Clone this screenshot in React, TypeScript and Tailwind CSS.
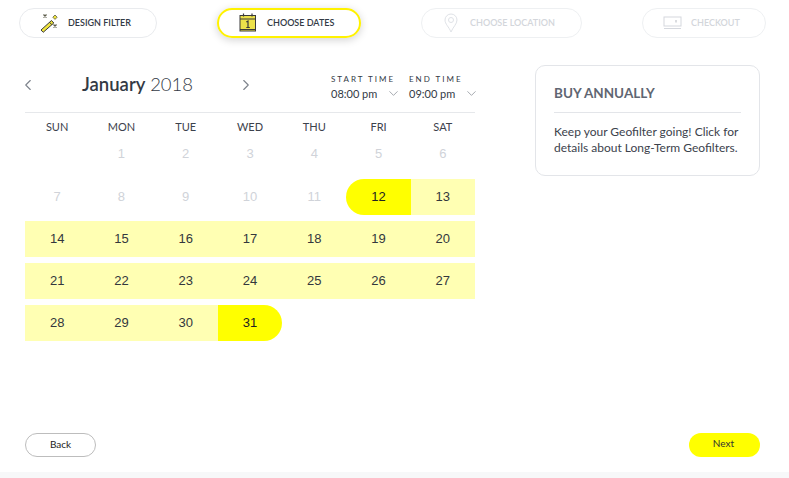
import React from "react";
import { ChevronLeft, ChevronRight, ChevronDown } from "lucide-react";

const Wand = () => (
  <svg width="20" height="20" viewBox="0 0 20 20" fill="none">
    <path d="M1 17 L11.500 7.500 L13.800 10 L3.200 19.300 Z" fill="#efe43c" stroke="#3a3a3a" strokeWidth="1" />
    <path d="M9.500 9.300 L11.800 11.700" stroke="#3a3a3a" strokeWidth="1" />
    <path d="M3.500 1.500 L6.500 4.500 M6.500 1.500 L3.500 4.500" stroke="#5b5b4a" strokeWidth="1.300" />
    <path d="M15 2 L17.200 4.200 L15 6.400 L12.800 4.200 Z" fill="#efe43c" stroke="#5b5b4a" strokeWidth="0.800" />
    <path d="M13.500 11.500 L16.500 14.500 M16.500 11.500 L13.500 14.500" stroke="#5b5b4a" strokeWidth="1.300" />
  </svg>
);

const CalIcon = () => (
  <svg width="18" height="20" viewBox="0 0 18 20" fill="none">
    <rect x="1" y="2.500" width="15.500" height="15.500" fill="#ece14a" stroke="#3a3a3a" strokeWidth="1" />
    <path d="M1 6 H16.500 M1 16.500 H16.500" stroke="#3a3a3a" strokeWidth="1" />
    <path d="M4.500 0.500 V3.500 M13 0.500 V3.500" stroke="#3a3a3a" strokeWidth="1.200" />
    <path d="M7.300 9 L9 8 V14.500 M7.300 14.500 H10.800" stroke="#3a3a3a" strokeWidth="1.200" />
  </svg>
);

const Pin = () => (
  <svg width="14" height="20" viewBox="0 0 14 20" fill="none" stroke="#dfe2e7" strokeWidth="1">
    <path d="M7 19 C5 14 1 11 1 7 A6 6 0 0 1 13 7 C13 11 9 14 7 19 Z" />
    <circle cx="7" cy="7" r="2.500" />
  </svg>
);

const Card = () => (
  <svg width="19" height="14" viewBox="0 0 19 14" fill="none" stroke="#d5d8de" strokeWidth="1">
    <rect x="1" y="1" width="17" height="9" />
    <path d="M1 12.500 H18" />
    <path d="M13 4 V6.500" stroke="#b5b9c0" />
  </svg>
);

const Step = ({ w, active, disabled, gap, pl, icon, label }: { w: string; active?: boolean; disabled?: boolean; gap: string; pl: string; icon: React.ReactNode; label: string }) => (
  <div
    className={`${w} ${pl} ${gap} flex items-center rounded-full h-[30px] text-[9px] font-semibold ${
      active
        ? "border-2 border-[#fff200] shadow-[0_2px_8px_rgba(0,0,0,0.18)] text-[#333a45]"
        : disabled
          ? "border border-[#eef0f2] text-[#d3d6db]"
          : "border border-[#e9ebee] text-[#333a45]"
    }`}
  >
    {icon}
    <span>{label}</span>
  </div>
);

const Day = ({ d, kind, short }: { d: number; kind: "off" | "mid" | "start" | "end"; short?: boolean }) => (
  <div
    className={`${short ? "h-[26px]" : "h-9"} flex items-center justify-center text-[13px] font-['Liberation_Sans',sans-serif] ${
      kind === "off"
        ? "text-[#d0d3d9]"
        : kind === "mid"
          ? "bg-[#ffffb3] text-[#33373d]"
          : kind === "start"
            ? "bg-[#ffff00] rounded-l-[18px] text-[#222]"
            : "bg-[#ffff00] rounded-r-[18px] text-[#222]"
    }`}
  >
    {d}
  </div>
);

const TimeSelect = ({ label, value }: { label: string; value: string }) => (
  <div>
    <div className="text-[8px] leading-[11px] tracking-[2px] text-[#333a45]">{label}</div>
    <div className="flex items-center gap-[8px] text-[11px] leading-[15px] text-[#333a45] mt-[1px]">
      <span className="w-[47px] whitespace-nowrap">{value}</span>
      <ChevronDown size={15} strokeWidth={1.100} className="text-[#7d838c]" />
    </div>
  </div>
);

export default function App() {
  const days = ["SUN", "MON", "TUE", "WED", "THU", "FRI", "SAT"];
  const rows: { d: number; kind: "mid" | "start" | "end" }[][] = [
    [14, 15, 16, 17, 18, 19, 20].map((d) => ({ d, kind: "mid" as const })),
    [21, 22, 23, 24, 25, 26, 27].map((d) => ({ d, kind: "mid" as const })),
  ];
  return (
    <div className="w-[789px] h-[478px] bg-white overflow-hidden flex flex-col font-['Lato','Liberation_Sans',sans-serif]">
      <div className="h-[472px] flex flex-col">
        <div className="flex items-center gap-[60px] pl-[19px] pt-[8px]">
          <Step w="w-[138px]" pl="pl-[20px]" gap="gap-[8px]" icon={<Wand />} label="DESIGN FILTER" />
          <Step w="w-[144px]" pl="pl-[20px]" gap="gap-[10px]" active icon={<CalIcon />} label="CHOOSE DATES" />
          <Step w="w-[161px]" pl="pl-[22px]" gap="gap-[12px]" disabled icon={<Pin />} label="CHOOSE LOCATION" />
          <Step w="w-[124px]" pl="pl-[20px]" gap="gap-[9px]" disabled icon={<Card />} label="CHECKOUT" />
        </div>

        <div className="flex flex-1 pl-[25px] pt-[27px]">
          <div className="w-[450px]">
            <div className="flex items-center h-[48px] border-b border-[#e6e8eb] pb-[7px]">
              <ChevronLeft size={18} strokeWidth={1.500} className="text-[#7d838c] -ml-[6px]" />
              <div className="ml-[45px] w-[155px] text-[18.500px] text-[#333a45]">
                <span className="font-semibold">January</span> <span className="font-light">2018</span>
              </div>
              <ChevronRight size={18} strokeWidth={1.500} className="text-[#7d838c]" />
              <div className="ml-auto -mr-[4px] mt-[5px] flex gap-[8px]">
                <TimeSelect label="START TIME" value="08:00 pm" />
                <TimeSelect label="END TIME" value="09:00 pm" />
              </div>
            </div>
            <div className="grid grid-cols-7 h-[28px] items-center text-center text-[11px] text-[#3c424c]">
              {days.map((d) => (
                <div key={d}>{d}</div>
              ))}
            </div>
            <div className="grid grid-cols-7">
              <div />
              {[1, 2, 3, 4, 5, 6].map((d) => (
                <Day key={d} d={d} kind="off" short />
              ))}
            </div>
            <div className="grid grid-cols-7 mt-[12px]">
              {[7, 8, 9, 10, 11].map((d) => (
                <Day key={d} d={d} kind="off" />
              ))}
              <Day d={12} kind="start" />
              <Day d={13} kind="mid" />
            </div>
            {rows.map((r, i) => (
              <div key={i} className="grid grid-cols-7 mt-[6px]">
                {r.map((c) => (
                  <Day key={c.d} d={c.d} kind={c.kind} />
                ))}
              </div>
            ))}
            <div className="grid grid-cols-7 mt-[6px]">
              <Day d={28} kind="mid" />
              <Day d={29} kind="mid" />
              <Day d={30} kind="mid" />
              <Day d={31} kind="end" />
            </div>
          </div>
          <div className="ml-[60px] w-[225px] h-[111px] border border-[#e3e5e9] rounded-[10px] px-[18px] pt-[18px] self-start">
            <div className="text-[13.500px] leading-[18px] font-bold text-[#5f6672] pb-[10px] border-b border-[#e3e5e9]">BUY ANNUALLY</div>
            <div className="text-[12px] leading-[16px] text-[#3c424c] mt-[11px] whitespace-nowrap">
              Keep your Geofilter going! Click for
              <br />
              details about Long-Term Geofilters.
            </div>
          </div>
        </div>

        <div className="flex justify-between pl-[25px] pr-[29px] pb-[15px]">
          <div className="w-[71px] h-[24px] pb-[2px] rounded-full border border-[#bdbdbd] flex items-center justify-center text-[10px] text-[#222]">Back</div>
          <div className="w-[71px] h-[24px] pb-[3px] pr-[2px] rounded-full bg-[#ffff00] flex items-center justify-center text-[10px] text-[#333]">Next</div>
        </div>
      </div>
      <div className="h-[6px] bg-[#f7f8f9]" />
    </div>
  );
}
